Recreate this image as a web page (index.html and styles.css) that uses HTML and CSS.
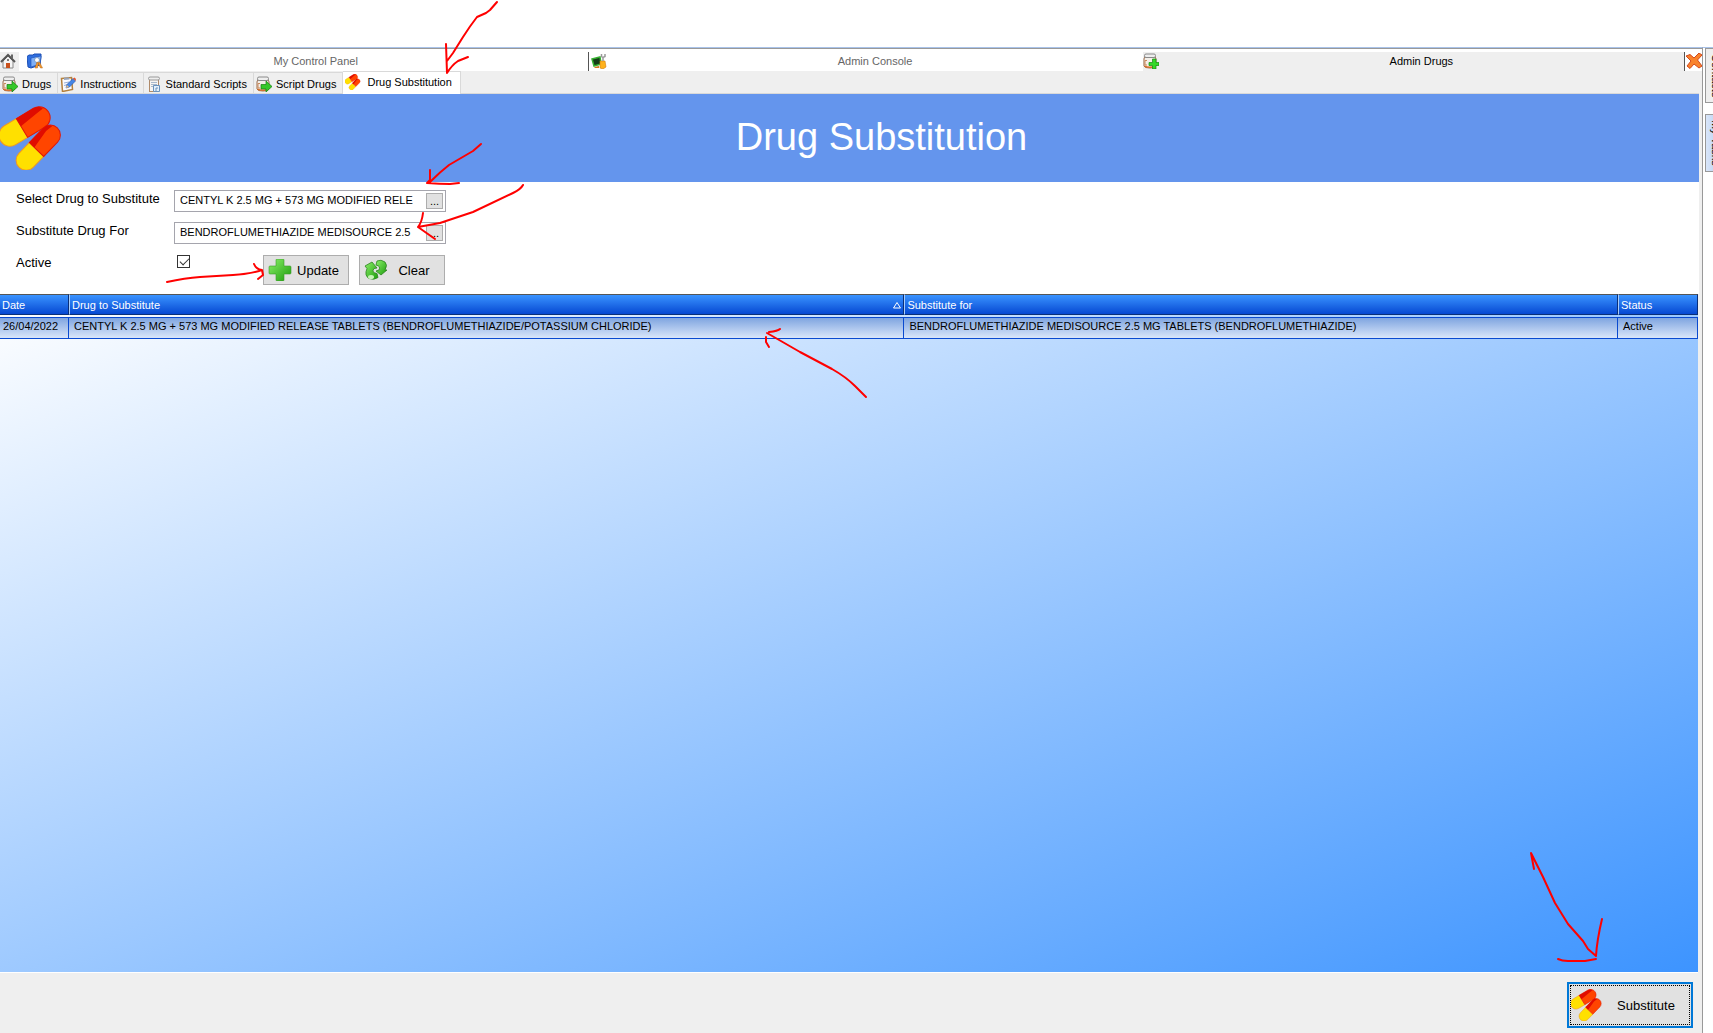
FILE: index.html
```html
<!DOCTYPE html>
<html lang="en">
<head>
    <meta charset="utf-8">
    <title>Drug Substitution</title>
    <link rel="stylesheet" href="styles.css">
</head>
<body>
    <svg class="sprite" aria-hidden="true">
        <defs>
            <linearGradient id="green" x1="0" y1="0" x2="1" y2="1">
                <stop offset="0" stop-color="#8cf06a"/>
                <stop offset="1" stop-color="#1c9c0c"/>
            </linearGradient>
        </defs>
        <symbol id="pills" viewBox="0 0 64 64">
            <g transform="translate(22 22) rotate(-31)">
                <path d="M0-11H-14a11 11 0 0 0 0 22H0z" fill="#ffe000" stroke="#f09a20"/>
                <path d="M0-11H20a11 11 0 0 1 0 22H0z" fill="#ff4500" stroke="#e01808"/>
                <path d="M0-11H20q6 0 8 5L20-5 0-2z" fill="#e00c00"/>
            </g>
            <g transform="translate(36.500 43.500) rotate(-46)">
                <path d="M0-10H-15a10 10 0 0 0 0 20H0z" fill="#ffe000" stroke="#f09a20"/>
                <path d="M0-10H20a10 10 0 0 1 0 20H0z" fill="#ff4500" stroke="#e01808"/>
                <path d="M0-10H20q6 0 8 5L20-6 0-3z" fill="#e00c00"/>
            </g>
        </symbol>
        <symbol id="jar" viewBox="0 0 16 16">
            <path d="M2 4q-1 1-1 2v7q0 2 6 2t6-2V6q0-1-1-2z" fill="#f4efe9" stroke="#9a6a48"/>
            <path d="M1.500 12.500q5 2 11 0v1.500q-5 2-11 0z" fill="#d9702a"/>
            <rect x="1.500" y="1" width="11" height="3.500" rx="1.500" fill="#eee" stroke="#8a8a8a"/>
            <path d="M4 7.500H2V12h2" fill="none" stroke="#c98a5c"/>
        </symbol>
        <symbol id="drug" viewBox="0 0 16 16">
            <use href="#jar"/>
            <path d="M5 8.500h5V5l6 5.500-6 5.500V13H5z" fill="#35c829" stroke="#167c10" stroke-width=".7"/>
        </symbol>
        <symbol id="drug-add" viewBox="0 0 16 16">
            <use href="#jar"/>
            <path d="M9.500 6H13v3.500h3V12.500h-3V16H9.500v-3.500H6V9.500H9.500z" fill="#35d829" stroke="#168c10" stroke-width=".7"/>
        </symbol>
        <symbol id="script" viewBox="0 0 16 16">
            <rect x="3.500" y="3.500" width="9" height="12" fill="#f7f5f2" stroke="#b08a68"/>
            <rect x="2.500" y="1" width="11" height="3" rx="1.500" fill="#eee" stroke="#999"/>
            <path d="M5 6.500h6M5 8.500h6M5 10.500h2" stroke="#a9b9cc"/>
            <path d="M7.500 15.500v-6h6v6zM10 15v-3h2" fill="#e4f0fb" stroke="#6b93bd"/>
        </symbol>
        <symbol id="note" viewBox="0 0 16 16">
            <path d="M1.500 2.500l10-1 1 12-10 2z" fill="#fbfbff" stroke="#b5813c" stroke-width="1.500"/>
            <path d="M4 1.500h5l.5 2-5.500.5z" fill="#98a4b8"/>
            <path d="M4 7l5-1M4 9.500l4-1" stroke="#9ab0d8"/>
            <path d="M6 12l1-3.500 6-6 2.500 2.500-6 6z" fill="#4586e6" stroke="#2454a4" stroke-width=".6"/>
            <path d="M13 2.500l2.500 2.500 .5-2-1.500-1.500z" fill="#e2552f"/>
            <path d="M6 12l1-3 2 2z" fill="#f0c080"/>
        </symbol>
        <symbol id="home" viewBox="0 0 16 16">
            <path d="M3 8v7h10V8L8 3z" fill="#f5f5f5" stroke="#888"/>
            <path d="M1 9l7-7 7 7" fill="none" stroke="#555" stroke-width="2"/>
            <path d="M11 1.500h2V6l-2-2z" fill="#666"/>
            <path d="M6 15v-5h4v5z" fill="#c9501c"/>
            <circle cx="8" cy="7" r="1" fill="#555"/>
        </symbol>
        <symbol id="panel" viewBox="0 0 16 16">
            <path d="M0 3.500L2 2h4l1-1 7 0v3l-1 8-9 3-3-1z" fill="#2f6fe0" stroke="#1c4fb4"/>
            <path d="M4 5l10-2-1 8-9 3z" fill="#7eb0f8" stroke="#1c4fb4" stroke-width=".6"/>
            <circle cx="10" cy="7" r="2.500" fill="#fff" stroke="#7a9cc8"/>
            <path d="M8 15l2-6 1.500 1L10.500 15zM15.500 15l-3-6-1.500 1 2.500 5z" fill="#f49a2c" stroke="#b86818" stroke-width=".5"/>
        </symbol>
        <symbol id="console" viewBox="0 0 16 16">
            <path d="M1 6l8-2 1 7-7 2z" fill="#143c18" stroke="#36b030" stroke-width="1.500"/>
            <path d="M3 14l5-1v2H4z" fill="#d07a20"/>
            <path d="M9 8h5l1 6-3 2-3-1z" fill="#ffb21c" stroke="#d07c10" stroke-width=".6"/>
            <path d="M12 8V4.500M10.500 1v2.500l1.500 1 2-1V1" fill="none" stroke="#9a9a9a" stroke-width="1.500"/>
        </symbol>
        <symbol id="close" viewBox="0 0 16 16">
            <path d="M0 3l4-1.500 4 3.500 5-5 3 2-4.500 5L16 13l-3 2-5-4-4 4.500L1 13l4-5z" fill="#f9822b" stroke="#d3481c"/>
        </symbol>
        <symbol id="plus" viewBox="0 0 22 22">
            <path d="M8 0h6q1 0 1 1v6h6q1 0 1 1v6q0 1-1 1h-6v6q0 1-1 1H8q-1 0-1-1v-6H1q-1 0-1-1V8q0-1 1-1h6V1q0-1 1-1z" fill="url(#green)" stroke="#3a9c28" stroke-width=".6"/>
        </symbol>
        <symbol id="refresh" viewBox="0 0 24 22">
            <path d="M1 7l7-4 5 6-3 .5q-3 4 3 5l1 4q-4 3-9 1-5-3-2-10z" fill="url(#green)" stroke="#2c8420" stroke-width=".8"/>
            <path d="M23 11l-6 5-5-4 3-1q2-4-3-5l1-4q4-2 8 1 3 3 0 8z" fill="url(#green)" stroke="#2c8420" stroke-width=".8"/>
            <ellipse cx="7" cy="18" rx="3" ry="2" fill="#c8f4b8"/>
        </symbol>
    </svg>

    <div class="window">
        <main class="main">
            <nav class="topbar">
                <button class="topbar__home" aria-label="Home"><svg class="icon"><use href="#home"/></svg></button>
                <button class="topbar__tab"><svg class="icon"><use href="#panel"/></svg><span>My Control Panel</span></button>
                <button class="topbar__tab topbar__tab--line"><svg class="icon"><use href="#console"/></svg><span>Admin Console</span></button>
                <button class="topbar__tab topbar__tab--active"><svg class="icon"><use href="#drug-add"/></svg><span>Admin Drugs</span></button>
                <button class="topbar__close" aria-label="Close"><svg class="icon"><use href="#close"/></svg></button>
            </nav>
            <nav class="tabs">
                <button class="tab"><svg class="icon"><use href="#drug"/></svg>Drugs</button>
                <button class="tab"><svg class="icon"><use href="#note"/></svg>Instructions</button>
                <button class="tab"><svg class="icon"><use href="#script"/></svg>Standard Scripts</button>
                <button class="tab"><svg class="icon"><use href="#drug"/></svg>Script Drugs</button>
                <button class="tab tab--active"><svg class="icon"><use href="#pills"/></svg>Drug Substitution</button>
            </nav>

            <header class="banner">
                <svg class="banner__icon"><use href="#pills"/></svg>
                <h1>Drug Substitution</h1>
            </header>

            <form class="form">
                <label for="drug">Select Drug to Substitute</label>
                <div class="picker">
                    <input id="drug" type="text" value="CENTYL K 2.5 MG + 573 MG MODIFIED RELE">
                    <button type="button">...</button>
                </div>
                <label for="substitute">Substitute Drug For</label>
                <div class="picker">
                    <input id="substitute" type="text" value="BENDROFLUMETHIAZIDE MEDISOURCE 2.5">
                    <button type="button">...</button>
                </div>
                <label for="active">Active</label>
                <div class="form__actions">
                    <input id="active" type="checkbox" checked>
                    <button class="button" type="button"><svg class="button__icon"><use href="#plus"/></svg><span>Update</span></button>
                    <button class="button" type="button"><svg class="button__icon"><use href="#refresh"/></svg><span>Clear</span></button>
                </div>
            </form>

            <section class="list">
                <table>
                    <colgroup>
                        <col class="col-date">
                        <col class="col-drug">
                        <col>
                        <col class="col-status">
                    </colgroup>
                    <thead>
                        <tr>
                            <th>Date</th>
                            <th><div class="sorted">Drug to Substitute
                                <svg class="sorted__mark" viewBox="0 0 8 7"><path d="M4 1L7.500 6.500H.5z"/></svg></div></th>
                            <th>Substitute for</th>
                            <th>Status</th>
                        </tr>
                    </thead>
                    <tbody>
                        <tr>
                            <td>26/04/2022</td>
                            <td>CENTYL K 2.5 MG + 573 MG MODIFIED RELEASE TABLETS (BENDROFLUMETHIAZIDE/POTASSIUM CHLORIDE)</td>
                            <td>BENDROFLUMETHIAZIDE MEDISOURCE 2.5 MG TABLETS (BENDROFLUMETHIAZIDE)</td>
                            <td>Active</td>
                        </tr>
                    </tbody>
                </table>
            </section>

            <footer class="footer">
                <button class="submit"><svg class="submit__icon"><use href="#pills"/></svg><span>Substitute</span></button>
            </footer>
        </main>

        <aside class="side">
            <button class="side__tab">Contacts</button>
            <button class="side__tab side__tab--active">My Tasks</button>
        </aside>
    </div>

    <!-- hand drawn arrows -->
    <svg class="arrows" aria-hidden="true">
        <path d="M497 2L490 10L486 13L477 17Q470 26 463 37L453 53L447 61M446 44L447 73Q452 65 458 61L468 57"/>
        <path d="M481 144L473 151L449 165Q440 172 430 182M430 170V180L427 183Q440 184 450 184L459 183"/>
        <path d="M523 185Q521 189 513 193L473 212L440 223L418 227M423 213Q422 222 418 227L435 239"/>
        <path d="M167 282Q185 278 200 277L233 275Q250 274 262 270M254 264Q256 269 262 270L263 275L258 279"/>
        <path d="M866 397L855 386Q846 377 832 369L800 352L767 333M780 329Q778 331 769 332M766 337V342L769 347"/>
        <path d="M1534 869L1531 853L1543 877L1555 903L1568 924L1583 941L1588 949L1596 956Q1597 940 1602 919M1558 959Q1562 961 1568 961H1585L1596 959"/>
    </svg>
</body>
</html>
```
FILE: styles.css
```css
* {
    box-sizing: border-box;
}

body {
    margin: 0;
    background: #fff;
    font-family: "Liberation Sans", Arial, sans-serif;
    font-size: 11px;
    color: #000;
}

button {
    font: inherit;
    color: inherit;
    margin: 0;
    padding: 0;
    border: 0;
    border-radius: 0;
    background: none;
}

.sprite {
    position: absolute;
    width: 0;
    height: 0;
}

.icon {
    width: 16px;
    height: 16px;
    flex: none;
}

.window {
    display: flex;
    min-height: 100vh;
    padding-top: 47px;
    overflow: hidden;
}

.main {
    flex: 1;
    min-width: 0;
    display: flex;
    flex-direction: column;
    border-top: 1px solid #a9c3ea;
    border-right: 1px solid #999;
    background: #efefef;
    padding-right: 3px;
}

/* window tabs */
.topbar {
    display: flex;
    height: 23px;
    margin-right: -3px;
    padding-top: 3px;
    border-top: 1px solid #999;
    background: #fff;
    color: #666;
}

.topbar__home {
    width: 19px;
    padding-right: 3px;
    margin-right: 8px;
    background: #efefef;
}

.topbar__tab {
    flex: 56;
    display: flex;
    align-items: center;
    padding-bottom: 2px;
}

.topbar__tab span {
    flex: 1;
    text-align: center;
}

.topbar__tab--line {
    flex: 55;
    border-left: 1px solid #555;
    padding-left: 2px;
}

.topbar__tab--active {
    flex: 54;
    background: #efefef;
    color: #000;
}

.topbar__close {
    width: 18px;
    border-left: 1px solid #555;
}

/* page tabs */
.tabs {
    display: flex;
    align-items: flex-end;
    height: 23px;
    border-bottom: 1px solid #d9d9d9;
}

.tab {
    display: flex;
    align-items: center;
    gap: 4px;
    height: 21px;
    padding: 2px 6px 0 2px;
    border-top: 1px solid #d9d9d9;
    border-right: 1px solid #d9d9d9;
}

.tab--active {
    height: 23px;
    margin-bottom: -1px;
    padding: 0 8px 2px 2px;
    gap: 6px;
    background: #fff;
}

.banner {
    display: flex;
    align-items: center;
    height: 88px;
    background: #6495ed;
    color: #fff;
}

.banner__icon {
    width: 64px;
    height: 64px;
}

.banner h1 {
    flex: 1;
    margin: 0;
    padding-bottom: 2px;
    font-size: 38px;
    font-weight: normal;
    line-height: 40px;
    text-align: center;
}

/* form */
.form {
    display: grid;
    grid-template-columns: 158px 272px;
    row-gap: 10px;
    padding: 8px 16px 9px;
    background: #fff;
    font-size: 13px;
}

.form label {
    line-height: 18px;
}

.picker {
    display: flex;
    height: 22px;
    padding: 2px;
    border: 1px solid #a5a5ad;
}

.picker input {
    flex: 1;
    min-width: 0;
    padding: 0 0 2px 3px;
    border: 0;
    outline: 0;
    font: inherit;
    font-size: 11px;
}

.picker button {
    width: 17px;
    height: 16px;
    border: 1px solid #adadad;
    background: #e1e1e1;
    font-size: 11px;
    line-height: 12px;
}

.form__actions {
    display: flex;
    align-items: flex-start;
    gap: 10px;
    padding-right: 1px;
}

.form__actions input {
    appearance: none;
    width: 13px;
    height: 13px;
    margin: 1px auto 0 3px;
    border: 1px solid #333;
    background: #fff;
}

.form__actions input:checked::before {
    content: "";
    display: block;
    width: 8px;
    height: 4px;
    margin: 2px 0 0 2px;
    border-left: 1px solid #333;
    border-bottom: 1px solid #333;
    transform: rotate(-45deg);
}

.button {
    display: flex;
    align-items: center;
    width: 86px;
    height: 30px;
    margin-top: 1px;
    padding: 0 4px;
    border: 1px solid #adadad;
    background: #e1e1e1;
}

.button__icon {
    width: 24px;
    height: 22px;
}

.button span {
    flex: 1;
    text-align: center;
}

/* list */
.list {
    flex: 1;
    display: flex;
    align-items: flex-start;
    margin-right: 1px;
    border-bottom: 1px solid #fff;
    background: linear-gradient(to bottom right, #fff, #3d94ff);
}

table {
    width: 100%;
    margin-top: -2px;
    table-layout: fixed;
    border-collapse: separate;
    border-spacing: 0 2px;
}

.col-date {
    width: 69px;
}

.col-drug {
    width: 49.2%;
}

.col-status {
    width: 80px;
}

th {
    height: 21px;
    padding: 0 2px;
    border-top: 1px solid #555;
    border-bottom: 1px solid #0a2f78;
    border-right: 1px solid #0a2f78;
    background: linear-gradient(#3a93ff, #0648d2);
    color: #fff;
    font-weight: normal;
    text-align: left;
}

th + th {
    border-left: 1px solid #a9cdfb;
}

.sorted {
    display: flex;
    justify-content: space-between;
}

.sorted__mark {
    width: 8px;
    height: 8px;
    margin-top: 2px;
    fill: none;
    stroke: #fff;
}

td {
    height: 22px;
    padding: 0 5px 4px;
    border: 1px solid #0a4ad0;
    border-left: 0;
    background: linear-gradient(#7fa5e0, #d9e6fa);
    white-space: nowrap;
    overflow: hidden;
}

td:first-child {
    padding: 0 3px 4px;
}

.footer {
    display: flex;
    justify-content: flex-end;
    padding: 9px 6px 5px;
}

.submit {
    display: flex;
    align-items: center;
    width: 126px;
    height: 46px;
    padding: 2px;
    border: 2px solid #0078d7;
    outline: 1px dotted #000;
    outline-offset: -4px;
    background: #e1e1e1;
    font-size: 13px;
}

.submit__icon {
    width: 32px;
    height: 32px;
}

.submit span {
    flex: 1;
    text-align: center;
}

/* side tabs run off the window */
.side {
    display: flex;
    flex-direction: column;
    align-items: flex-start;
    gap: 11px;
    width: 10px;
    padding-left: 2px;
    border-top: 1px solid #a9c3ea;
}

.side__tab {
    width: 22px;
    height: 55px;
    border: 1px solid #999;
    background: #efefef;
    writing-mode: vertical-rl;
}

.side__tab--active {
    height: 58px;
    background: linear-gradient(to right, #d9e6fa, #a9c3ea);
}

.arrows {
    position: absolute;
    top: 0;
    left: 0;
    width: 100%;
    height: 100%;
    fill: none;
    stroke: #f00;
    stroke-width: 2;
    stroke-linecap: round;
    stroke-linejoin: round;
    pointer-events: none;
}
```
